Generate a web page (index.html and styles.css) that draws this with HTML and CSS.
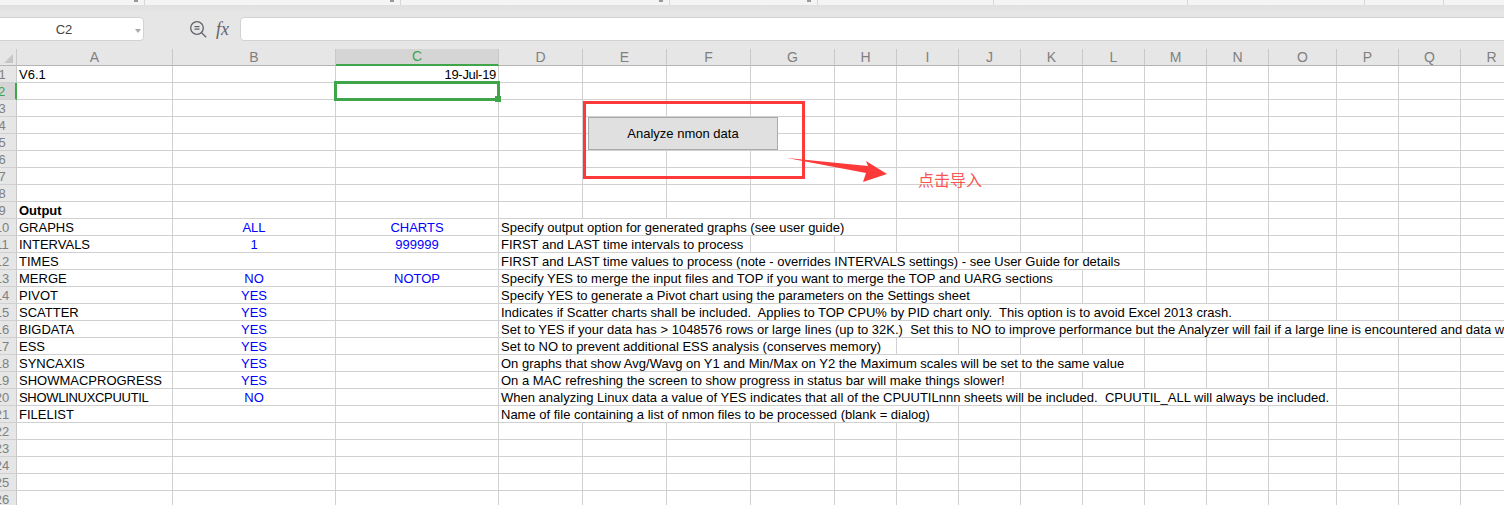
FILE: index.html
```html
<!DOCTYPE html>
<html lang="en">
<head>
<meta charset="utf-8">
<title>nmon analyser</title>
<link rel="stylesheet" href="styles.css">
</head>
<body>
<div class="strip">
  <div class="seg w1 tick"></div><div class="seg w2 tick"></div><div class="seg w3 tick"></div><div class="seg w4 tick"></div><div class="seg w5"></div><div class="seg w6"></div><div class="seg w7"></div><div class="seg w8"></div>
</div>
<div class="bar">
  <div class="namebox"><span>C2</span><i class="caret"></i></div>
  <svg class="zoomicon" width="20" height="20" viewBox="0 0 20 20"><circle cx="8" cy="8" r="6.3" fill="none" stroke="#5f6368" stroke-width="1.3"/><path d="M5.5 6.6h5M5.5 9.2h5M12.6 12.8l4.6 4.4" fill="none" stroke="#5f6368" stroke-width="1.2"/></svg>
  <span class="fx">fx</span>
  <div class="formula"></div>
</div>
<table class="sheet">
  <colgroup><col class="ch"><col class="ca"><col class="cb"><col class="cb"><col class="cd"><col class="cd"><col class="cd"><col class="cd"><col class="cn"><col class="cn"><col class="cn"><col class="cn"><col class="cn"><col class="cn"><col class="cn"><col class="co"><col class="cn"><col class="cn"><col class="cn"></colgroup>
  <thead>
    <tr><th class="corner"><i></i></th><th>A</th><th>B</th><th class="on">C</th><th>D</th><th>E</th><th>F</th><th>G</th><th>H</th><th>I</th><th>J</th><th>K</th><th>L</th><th>M</th><th>N</th><th>O</th><th>P</th><th>Q</th><th>R</th></tr>
  </thead>
  <tbody>
    <tr><th>1</th><td>V6.1</td><td></td><td class="r tight">19-Jul-19</td><td></td><td></td><td></td><td></td><td></td><td></td><td></td><td></td><td></td><td></td><td></td><td></td><td></td><td></td><td></td></tr>
    <tr><th class="rowon">2</th><td></td><td></td><td class="sel"></td><td></td><td></td><td></td><td></td><td></td><td></td><td></td><td></td><td></td><td></td><td></td><td></td><td></td><td></td><td></td></tr>
    <tr><th>3</th><td></td><td></td><td></td><td></td><td></td><td></td><td></td><td></td><td></td><td></td><td></td><td></td><td></td><td></td><td></td><td></td><td></td><td></td></tr>
    <tr><th>4</th><td></td><td></td><td></td><td></td><td></td><td></td><td></td><td></td><td></td><td></td><td></td><td></td><td></td><td></td><td></td><td></td><td></td><td></td></tr>
    <tr><th>5</th><td></td><td></td><td></td><td></td><td></td><td></td><td></td><td></td><td></td><td></td><td></td><td></td><td></td><td></td><td></td><td></td><td></td><td></td></tr>
    <tr><th>6</th><td></td><td></td><td></td><td></td><td></td><td></td><td></td><td></td><td></td><td></td><td></td><td></td><td></td><td></td><td></td><td></td><td></td><td></td></tr>
    <tr><th>7</th><td></td><td></td><td></td><td></td><td></td><td></td><td></td><td></td><td></td><td></td><td></td><td></td><td></td><td></td><td></td><td></td><td></td><td></td></tr>
    <tr><th>8</th><td></td><td></td><td></td><td></td><td></td><td></td><td></td><td></td><td></td><td></td><td></td><td></td><td></td><td></td><td></td><td></td><td></td><td></td></tr>
    <tr><th>9</th><td class="b">Output</td><td></td><td></td><td></td><td></td><td></td><td></td><td></td><td></td><td></td><td></td><td></td><td></td><td></td><td></td><td></td><td></td><td></td></tr>
    <tr><th>10</th><td>GRAPHS</td><td class="v">ALL</td><td class="v">CHARTS</td><td colspan="5">Specify output option for generated graphs (see user guide)</td><td></td><td></td><td></td><td></td><td></td><td></td><td></td><td></td><td></td><td></td></tr>
    <tr><th>11</th><td>INTERVALS</td><td class="v">1</td><td class="v">999999</td><td colspan="3">FIRST and LAST time intervals to process</td><td></td><td></td><td></td><td></td><td></td><td></td><td></td><td></td><td></td><td></td><td></td><td></td></tr>
    <tr><th>12</th><td>TIMES</td><td></td><td></td><td colspan="9">FIRST and LAST time values to process (note - overrides INTERVALS settings) - see User Guide for details</td><td></td><td></td><td></td><td></td><td></td><td></td></tr>
    <tr><th>13</th><td>MERGE</td><td class="v">NO</td><td class="v">NOTOP</td><td colspan="8">Specify YES to merge the input files and TOP if you want to merge the TOP and UARG sections</td><td></td><td></td><td></td><td></td><td></td><td></td><td></td></tr>
    <tr><th>14</th><td>PIVOT</td><td class="v">YES</td><td></td><td colspan="7">Specify YES to generate a Pivot chart using the parameters on the Settings sheet</td><td></td><td></td><td></td><td></td><td></td><td></td><td></td><td></td></tr>
    <tr><th>15</th><td>SCATTER</td><td class="v">YES</td><td></td><td colspan="11">Indicates if Scatter charts shall be included.&nbsp; Applies to TOP CPU% by PID chart only.&nbsp; This option is to avoid Excel 2013 crash.</td><td></td><td></td><td></td><td></td></tr>
    <tr><th>16</th><td>BIGDATA</td><td class="v">YES</td><td></td><td colspan="15">Set to YES if your data has &gt; 1048576 rows or large lines (up to 32K.)&nbsp; Set this to NO to improve performance but the Analyzer will fail if a large line is encountered and data will be lost</td></tr>
    <tr><th>17</th><td>ESS</td><td class="v">YES</td><td></td><td colspan="5">Set to NO to prevent additional ESS analysis (conserves memory)</td><td></td><td></td><td></td><td></td><td></td><td></td><td></td><td></td><td></td><td></td></tr>
    <tr><th>18</th><td>SYNCAXIS</td><td class="v">YES</td><td></td><td colspan="9">On graphs that show Avg/Wavg on Y1 and Min/Max on Y2 the Maximum scales will be set to the same value</td><td></td><td></td><td></td><td></td><td></td><td></td></tr>
    <tr><th>19</th><td>SHOWMACPROGRESS</td><td class="v">YES</td><td></td><td colspan="7">On a MAC refreshing the screen to show progress in status bar will make things slower!</td><td></td><td></td><td></td><td></td><td></td><td></td><td></td><td></td></tr>
    <tr><th>20</th><td class="tight">SHOWLINUXCPUUTIL</td><td class="v">NO</td><td></td><td colspan="12">When analyzing Linux data a value of YES indicates that all of the CPUUTILnnn sheets will be included.&nbsp; CPUUTIL_ALL will always be included.</td><td></td><td></td><td></td></tr>
    <tr><th>21</th><td>FILELIST</td><td></td><td></td><td colspan="6">Name of file containing a list of nmon files to be processed (blank = dialog)</td><td></td><td></td><td></td><td></td><td></td><td></td><td></td><td></td><td></td></tr>
    <tr><th>22</th><td></td><td></td><td></td><td></td><td></td><td></td><td></td><td></td><td></td><td></td><td></td><td></td><td></td><td></td><td></td><td></td><td></td><td></td></tr>
    <tr><th>23</th><td></td><td></td><td></td><td></td><td></td><td></td><td></td><td></td><td></td><td></td><td></td><td></td><td></td><td></td><td></td><td></td><td></td><td></td></tr>
    <tr><th>24</th><td></td><td></td><td></td><td></td><td></td><td></td><td></td><td></td><td></td><td></td><td></td><td></td><td></td><td></td><td></td><td></td><td></td><td></td></tr>
    <tr><th>25</th><td></td><td></td><td></td><td></td><td></td><td></td><td></td><td></td><td></td><td></td><td></td><td></td><td></td><td></td><td></td><td></td><td></td><td></td></tr>
    <tr><th>26</th><td></td><td></td><td></td><td></td><td></td><td></td><td></td><td></td><td></td><td></td><td></td><td></td><td></td><td></td><td></td><td></td><td></td><td></td></tr>
  </tbody>
</table>
<div class="redbox"></div>
<div class="macro">Analyze nmon data</div>
<svg class="arrow" width="104" height="28" viewBox="0 0 104 28"><polygon points="0,2 81,10 79,5 100,18 76,26 79,17" fill="#fc3a3a"/></svg>
<div class="note">点击导入</div>
</body>
</html>
```
FILE: styles.css
```css
* { box-sizing: border-box; }
html, body { margin: 0; height: 100%; overflow: hidden; background: #fff; }
body { position: relative; width: 1504px; height: 505px; font-family: "Liberation Sans", Arial, sans-serif; }

.strip { display: flex; height: 5px; background: #f4f4f4; }
.seg { position: relative; height: 5px; border-right: 1px solid #d8d8d8; flex: none; }
.w1 { width: 145px; } .w2 { width: 256px; } .w3 { width: 269px; } .w4 { width: 148px; }
.w5 { width: 176px; } .w6 { width: 194px; } .w7 { width: 177px; } .w8 { width: 79px; }
.tick::after { content: ""; position: absolute; right: 6px; top: 0; width: 4px; height: 2px; background: #999; }

.bar {
  display: flex; align-items: flex-start; height: 44px; padding-top: 12px;
  background: linear-gradient(#e0e0e0, #e6e6e6 8px) #e6e6e6;
}
.namebox {
  display: flex; align-items: center; justify-content: center; position: relative; flex: none;
  width: 154px; height: 24px; margin-left: -10px; padding-right: 6px; background: #fff;
  border: 1px solid #d2d2d2; border-radius: 4px;
  font-size: 13px; color: #444;
}
.caret {
  position: absolute; right: 2px; top: 11px; width: 0; height: 0;
  border-left: 3px solid transparent; border-right: 3px solid transparent; border-top: 4px solid #aaa;
}
.zoomicon { flex: none; margin: 3px 0 0 45px; }
.fx { flex: none; width: 22px; margin: 2px 0 0 7px; font: italic 18px "Liberation Serif", serif; color: #5f6368; }
.formula { flex: none; width: 1300px; height: 24px; margin-left: 2px; background: #fff; border: 1px solid #d2d2d2; border-radius: 4px 0 0 4px; }

.sheet { table-layout: fixed; width: 1534px; margin-left: -12px; border-collapse: separate; border-spacing: 0; }
.ch { width: 29px; } .ca { width: 156px; } .cb { width: 163px; } .cd { width: 84px; } .cn { width: 62px; } .co { width: 68px; }

.sheet th, .sheet td { height: 17px; padding: 1px 0 0; overflow: hidden; white-space: nowrap; line-height: 15px; }
.sheet th {
  background: #e6e6e6; color: #808080; font-weight: normal; text-align: center;
  border-right: 1px solid #c8c8c8; border-bottom: 1px solid #d0d0d0; font-size: 13px;
}
.sheet thead th { font-size: 14px; border-bottom-color: #b4b4b4; padding-top: 0; line-height: 16px; }
.sheet thead th.on { background: #d5d5d5; color: #3fa548; border-bottom: 2px solid #3fa548; line-height: 15px; }
.sheet th.corner { text-align: right; line-height: 0; padding: 5px 3px 0 0; vertical-align: top; }
.corner i { display: inline-block; width: 9px; height: 9px; background: #c6c6c6; clip-path: polygon(100% 0, 100% 100%, 0 100%); }
.sheet th.rowon { background: #d5d5d5; color: #3fa548; border-right: 2px solid #3fa548; }

.sheet td {
  font-size: 13px; color: #000; padding: 1px 2px 0;
  border-right: 1px solid #d0d0d0; border-bottom: 1px solid #d0d0d0;
}
.sheet td.r { text-align: right; }
.sheet td.tight { letter-spacing: -.3px; }
.sheet td.v { text-align: center; color: #0000ff; }
.sheet td.b { font-weight: bold; }
.sheet td.sel { position: relative; overflow: visible; }
.sel::before { content: ""; position: absolute; left: -2px; top: -2px; right: -2px; bottom: -2px; border: 3px solid #3fa548; }
.sel::after { content: ""; position: absolute; right: -3px; bottom: -3px; width: 6px; height: 6px; background: #3fa548; }

.redbox { position: absolute; left: 583px; top: 101px; width: 222px; height: 78px; border: 3px solid #fc3a3a; }
.macro {
  position: absolute; left: 588px; top: 117px; width: 190px; height: 33px;
  display: flex; align-items: center; justify-content: center;
  background: #e0e0e0; border: 1px solid #aaa; font-size: 13px; color: #000;
}
.arrow { position: absolute; left: 787px; top: 156px; }
.note { position: absolute; left: 918px; top: 167px; font: 16px/24px "Noto Sans CJK SC", sans-serif; color: #fb5555; }
```
